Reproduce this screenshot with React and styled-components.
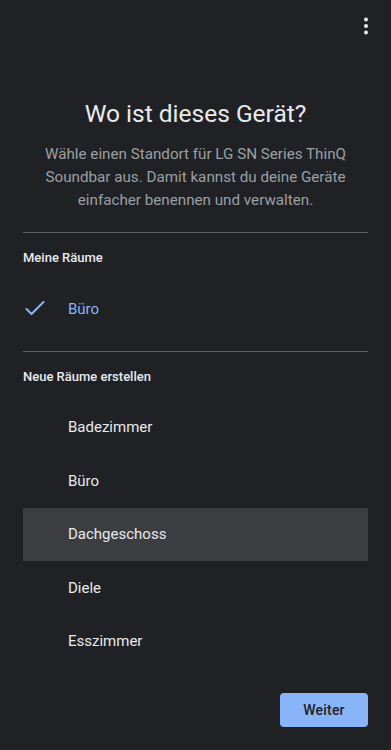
import React from "react";
import styled, { createGlobalStyle } from "styled-components";

const GlobalStyle = createGlobalStyle`
  html, body {
    margin: 0;
    padding: 0;
    background: #202124;
  }
  body {
    font-family: Roboto, "Noto Sans", Arial, sans-serif;
    -webkit-font-smoothing: antialiased;
  }
`;

const Screen = styled.div`
  width: 391px;
  height: 750px;
  background: #202124;
  color: #e8eaed;
  display: flex;
  flex-direction: column;
  box-sizing: border-box;
  overflow: hidden;
`;

const TopBar = styled.div`
  height: 52px;
  display: flex;
  justify-content: flex-end;
  align-items: center;
  padding-right: 13px;
`;

const MenuButton = styled.div`
  width: 24px;
  height: 24px;
  display: flex;
  align-items: center;
  justify-content: center;
`;

const Title = styled.h1`
  margin: 46px 0 0;
  font-size: 24.5px;
  line-height: 32px;
  font-weight: 400;
  text-align: center;
  color: #e8eaed;
`;

const Subtitle = styled.p`
  margin: 13px 0 0;
  font-size: 15.2px;
  line-height: 23px;
  text-align: center;
  color: #9aa0a6;
`;

const Content = styled.div`
  padding: 0 23px;
  display: flex;
  flex-direction: column;
`;

const Divider = styled.div`
  height: 1px;
  background: #5f6368;
  margin-top: ${(p) => p.$top}px;
`;

const SectionHeader = styled.div`
  margin-top: ${(p) => p.$top || 15}px;
  font-size: 13px;
  line-height: 20px;
  font-weight: 500;
  color: #e8eaed;
`;

const List = styled.div`
  margin-top: ${(p) => p.$top}px;
  display: flex;
  flex-direction: column;
`;

const Row = styled.div`
  height: 53.5px;
  display: flex;
  align-items: center;
  background: ${(p) => (p.$active ? "#3c3d41" : "transparent")};
`;

const IconSlot = styled.div`
  width: 45px;
  display: flex;
  align-items: center;
`;

const RowLabel = styled.span`
  font-size: 15px;
  color: ${(p) => (p.$selected ? "#8ab4f8" : "#e8eaed")};
`;

const Footer = styled.div`
  margin-top: auto;
  padding: 0 23px 23px;
  display: flex;
  justify-content: flex-end;
`;

const NextButton = styled.button`
  width: 88px;
  height: 34px;
  border: none;
  border-radius: 4px;
  background: #8ab4f8;
  color: #202124;
  font-family: Roboto, "Noto Sans", Arial, sans-serif;
  font-size: 14px;
  font-weight: 500;
  letter-spacing: 0.2px;
`;

const DotsIcon = () => (
  <svg width="24" height="24" viewBox="0 0 24 24" fill="#e8eaed">
    <circle cx="12" cy="5.5" r="2" />
    <circle cx="12" cy="12" r="2" />
    <circle cx="12" cy="18.5" r="2" />
  </svg>
);

const CheckIcon = () => (
  <svg width="24" height="24" viewBox="0 0 24 24" fill="none">
    <polyline
      points="3.5,12 8.5,17 20.5,5"
      stroke="#8ab4f8"
      strokeWidth="2"
      strokeLinecap="round"
      strokeLinejoin="round"
    />
  </svg>
);

const newRooms = ["Badezimmer", "Büro", "Dachgeschoss", "Diele", "Esszimmer"];

export default function App() {
  return (
    <Screen>
      <GlobalStyle />
      <TopBar>
        <MenuButton>
          <DotsIcon />
        </MenuButton>
      </TopBar>
      <Title>Wo ist dieses Gerät?</Title>
      <Subtitle>
        Wähle einen Standort für LG SN Series ThinQ
        <br />
        Soundbar aus. Damit kannst du deine Geräte
        <br />
        einfacher benennen und verwalten.
      </Subtitle>
      <Content>
        <Divider $top={20} />
        <SectionHeader>Meine Räume</SectionHeader>
        <List $top={14}>
          <Row>
            <IconSlot>
              <CheckIcon />
            </IconSlot>
            <RowLabel $selected>Büro</RowLabel>
          </Row>
        </List>
        <Divider $top={15} />
        <SectionHeader $top={15}>Neue Räume erstellen</SectionHeader>
        <List $top={14}>
          {newRooms.map((room) => (
            <Row key={room} $active={room === "Dachgeschoss"}>
              <IconSlot />
              <RowLabel>{room}</RowLabel>
            </Row>
          ))}
        </List>
      </Content>
      <Footer>
        <NextButton>Weiter</NextButton>
      </Footer>
    </Screen>
  );
}
